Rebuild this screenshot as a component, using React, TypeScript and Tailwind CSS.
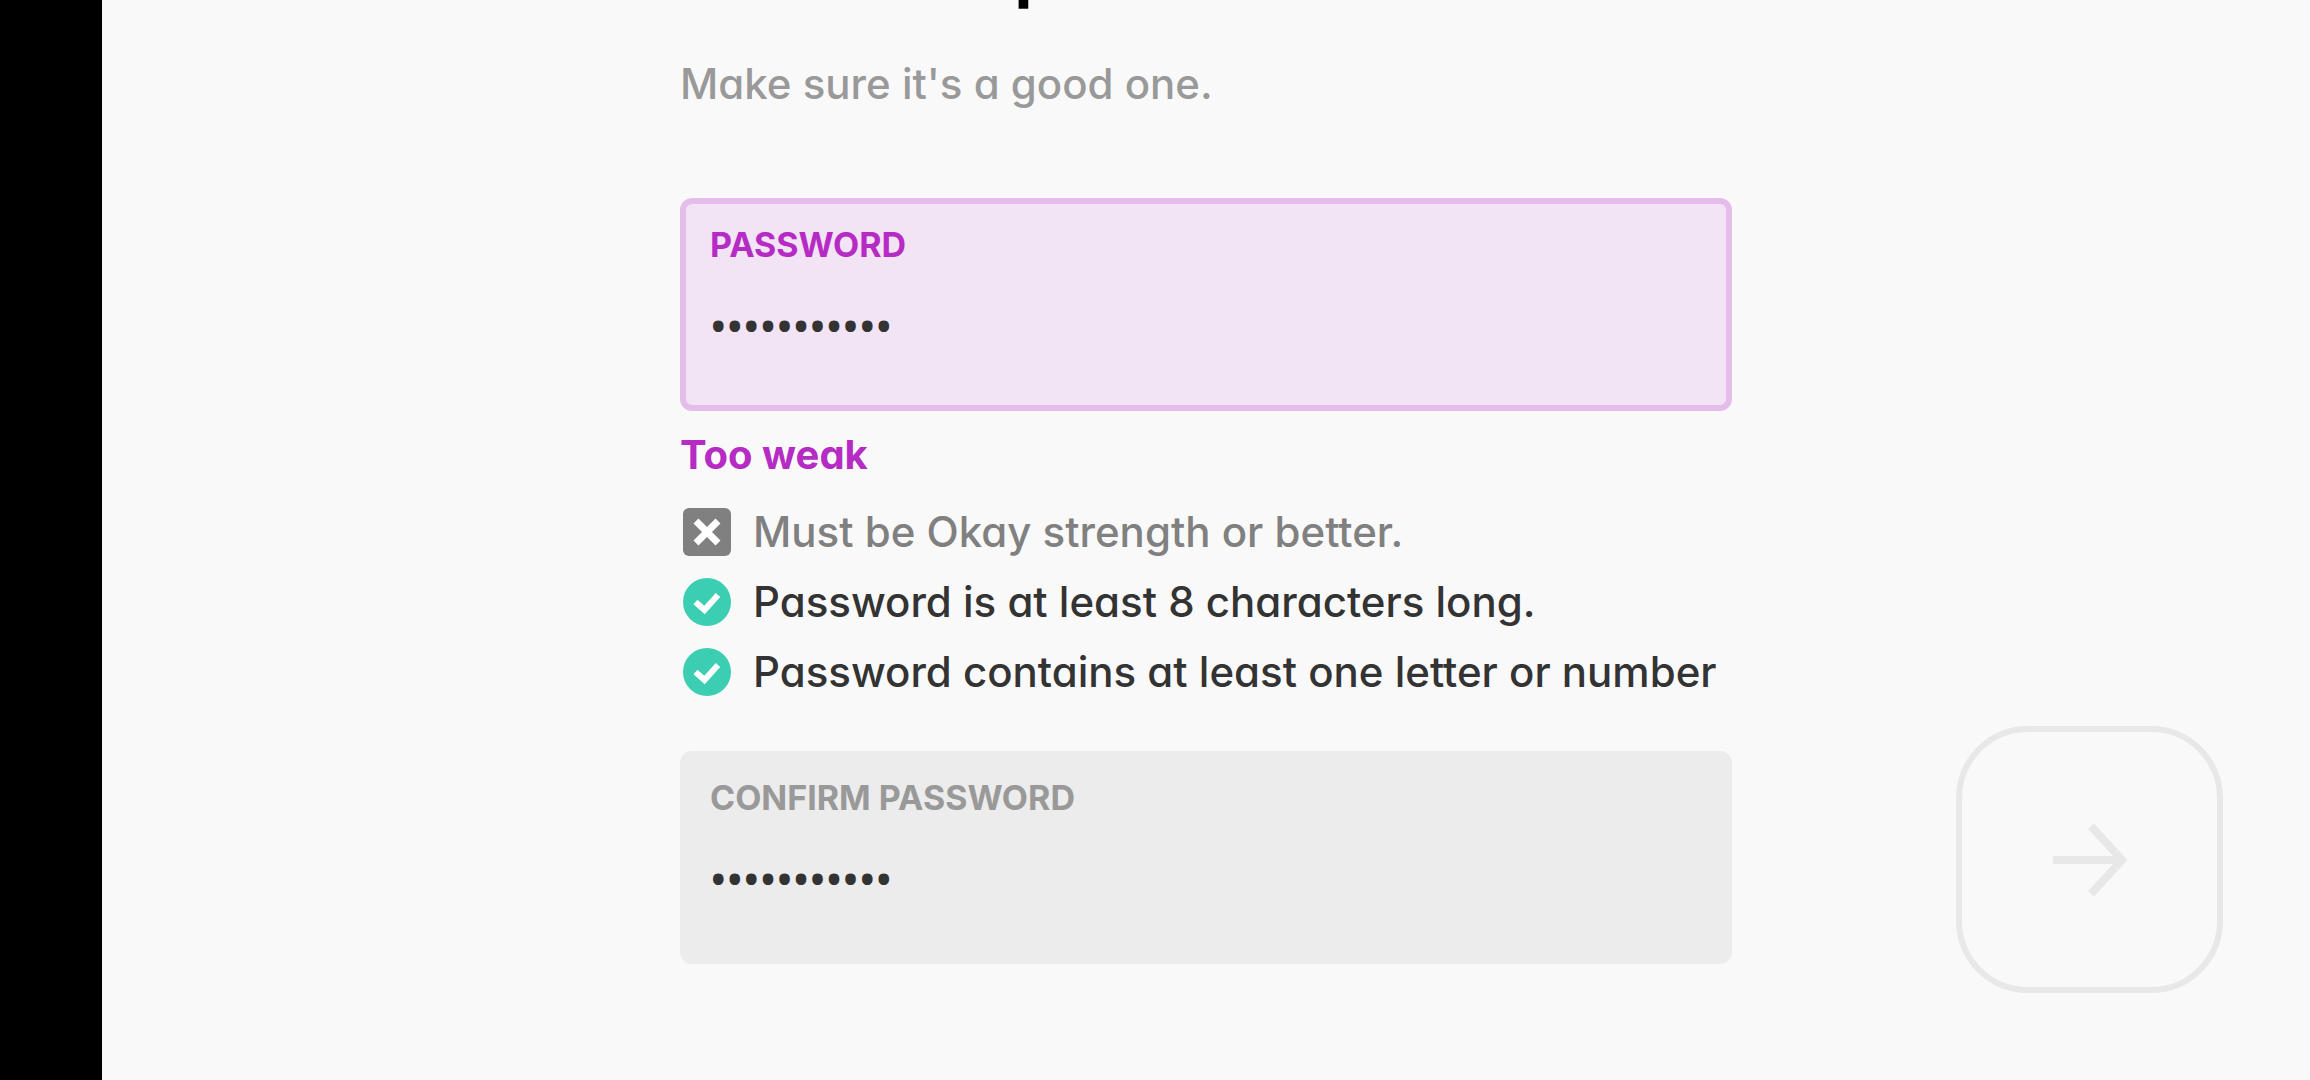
import clsx from "clsx";
import { useState } from "react";

interface PasswordFieldProps {
  id: string;
  label: string;
  value: string;
  onChange: (value: string) => void;
  invalid?: boolean;
}

interface RequirementProps {
  met: boolean;
  text: string;
}

const REQUIREMENTS: RequirementProps[] = [
  { met: false, text: "Must be Okay strength or better." },
  { met: true, text: "Password is at least 8 characters long." },
  { met: true, text: "Password contains at least one letter or number" },
];

function PasswordField({ id, label, value, onChange, invalid }: PasswordFieldProps) {
  return (
    <div
      className={clsx(
        "flex h-[213px] flex-col rounded-xl border-6 px-6 pt-[21px]",
        invalid ? "border-[#e5bdea] bg-[#f2e4f4]" : "border-[#ececec] bg-[#ececec]",
      )}
    >
      <label
        htmlFor={id}
        className={clsx(
          "text-[34px] leading-10 font-bold uppercase",
          invalid ? "text-[#b52bc4]" : "text-[#999999]",
        )}
      >
        {label}
      </label>
      <input
        id={id}
        type="password"
        value={value}
        onChange={(e) => onChange(e.target.value)}
        className="mt-7 h-16 w-full bg-transparent font-['Noto_Sans',sans-serif] text-[44px] font-medium text-[#333333] outline-none"
      />
    </div>
  );
}

function Requirement({ met, text }: RequirementProps) {
  return (
    <li className="flex h-[70px] items-center gap-[22px]">
      {met ? (
        <svg className="ml-[3px] size-12 shrink-0" viewBox="0 0 48 48" aria-hidden="true">
          <circle cx="24" cy="24" r="24" fill="#3bceb2" />
          <path d="M12.5 24 21.5 32 35 17" fill="none" stroke="#fff" strokeWidth="6" />
        </svg>
      ) : (
        <svg className="ml-[3px] size-12 shrink-0" viewBox="0 0 48 48" aria-hidden="true">
          <rect width="48" height="48" rx="6" fill="#808080" />
          <path d="M13 13 35 35M35 13 13 35" stroke="#fff" strokeWidth="7" />
        </svg>
      )}
      <span
        className={clsx(
          "text-[42px] leading-[48px] font-medium whitespace-nowrap",
          met ? "text-[#333333]" : "text-[#808080]",
        )}
      >
        {text}
      </span>
    </li>
  );
}

export default function App() {
  const [password, setPassword] = useState("password123");
  const [confirm, setConfirm] = useState("password123");

  return (
    <div className="flex h-screen overflow-hidden bg-[#f9f9f9] font-['Inter',sans-serif] [font-feature-settings:'cv11','calt'_0] [font-variant-ligatures:none]">
      <aside className="w-[102px] shrink-0 bg-black" />

      <form
        className="grid flex-1 grid-cols-[1fr_minmax(0,1052px)_1fr]"
        onSubmit={(e) => e.preventDefault()}
      >
        <div className="col-start-2">
          {/* Title is scrolled almost out of view */}
          <h1 className="-mt-[83px] text-[76px] leading-[96px] font-semibold text-black">
            Create a password
          </h1>
          <p className="mt-[47px] text-[42px] leading-[48px] font-medium text-[#999999]">
            Make sure it's a good one.
          </p>

          <div className="mt-[90px]">
            <PasswordField
              id="password"
              label="Password"
              value={password}
              onChange={setPassword}
              invalid
            />
          </div>

          <p className="mt-5 text-[40px] leading-[48px] font-bold text-[#b52bc4]">Too weak</p>

          <ul className="mt-[18px]">
            {REQUIREMENTS.map((item) => (
              <Requirement key={item.text} {...item} />
            ))}
          </ul>

          <div className="mt-11">
            <PasswordField
              id="confirm-password"
              label="Confirm password"
              value={confirm}
              onChange={setConfirm}
            />
          </div>
        </div>

        <button
          type="submit"
          aria-label="Continue"
          className="mr-[87px] mb-[87px] flex size-[267px] items-center justify-center self-end justify-self-end rounded-[72px] border-6 border-[#e8e8e8]"
        >
          <svg className="size-[74px]" viewBox="0 0 74 74" aria-hidden="true">
            <path d="M0 37H68M38 3 69 37 38 71" fill="none" stroke="#e8e8e8" strokeWidth="8" />
          </svg>
        </button>
      </form>
    </div>
  );
}
